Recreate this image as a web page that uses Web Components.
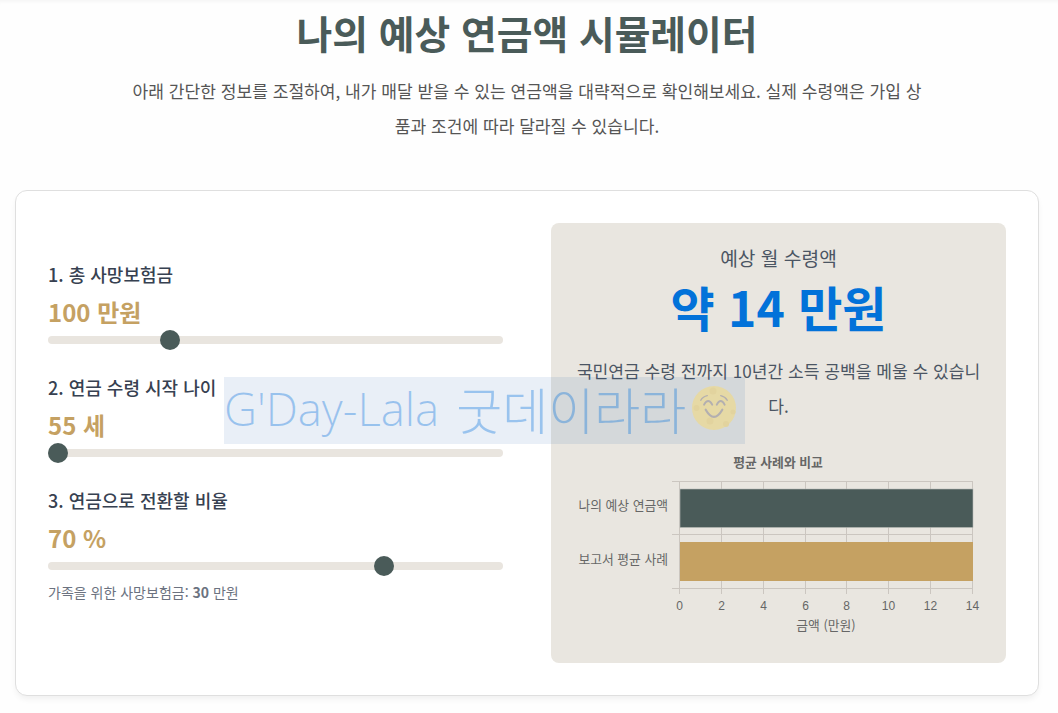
<!DOCTYPE html>
<html lang="ko">
<head>
<meta charset="utf-8">
<title>나의 예상 연금액 시뮬레이터</title>
<style>
  html, body { margin: 0; background: #fefefe; }
  body {
    height: 713px;
    overflow: hidden;
    position: relative;
    font-family: "Noto Sans CJK KR", "Noto Sans", sans-serif;
    color: #3d4852;
    box-shadow: inset 0 4px 4px -3px rgba(0, 0, 0, 0.05);
  }
</style>
</head>
<body>
<template id="range-field-tpl">
  <style>
    :host { display: block; }
    .label { font-size: 18px; line-height: 24px; font-weight: 500; color: #374151; margin-top: -1px; }
    .value { font-size: 24px; line-height: 32px; font-weight: 700; color: #c5a162; margin-top: 10px; }
    input {
      -webkit-appearance: none;
      appearance: none;
      display: block;
      width: 100%;
      height: 8px;
      margin: 8px 0 0;
      border-radius: 8px;
      background: #e9e5df;
    }
    input::-webkit-slider-thumb {
      -webkit-appearance: none;
      width: 20px;
      height: 20px;
      border-radius: 50%;
      background: #4a5b59;
    }
    ::slotted(p) { margin: 12px 0 0; font-size: 14px; line-height: 20px; color: #6b7280; }
  </style>
  <div class="label"></div>
  <div class="value"></div>
  <input type="range">
  <slot></slot>
</template>

<template id="pension-watermark-tpl">
  <style>
    :host {
      position: absolute;
      left: 224px;
      top: 377px;
      width: 521px;
      height: 67px;
      box-sizing: border-box;
      padding-bottom: 6px;
      display: flex;
      align-items: center;
      white-space: nowrap;
      background: rgba(0, 70, 162, 0.086);
      color: rgba(0, 110, 220, 0.34);
      font-family: "Open Sans", sans-serif;
      font-size: 45.500px;
      font-weight: 300;
      pointer-events: none;
    }
    .ko { font-family: "Noto Sans CJK KR", sans-serif; font-size: 50px; margin-left: 17px; }
    svg { margin-left: 5px; flex: none; }
  </style>
  <span>G'Day-Lala</span><span class="ko">굿데이라라</span>
  <svg width="46" height="46" viewBox="0 0 46 46">
    <circle cx="23" cy="23" r="22" fill="#e6d9a5"/>
    <g fill="#e2d39e">
      <circle cx="22" cy="6" r="3.500"/>
      <circle cx="5.500" cy="23" r="3"/>
      <circle cx="19" cy="36" r="3.500"/>
      <circle cx="35" cy="39" r="3"/>
      <circle cx="42" cy="27" r="2.500"/>
    </g>
    <g fill="none" stroke="#b3afb0" stroke-linecap="round">
      <path stroke-width="1.300" d="M9.700 15.300 Q12 11.500 16.300 10.700"/>
      <path stroke-width="1.300" d="M29.700 10.700 Q34 11.500 36.300 15.300"/>
      <path stroke-width="1.800" d="M13 19.700 Q17.200 12.300 21.300 19.700"/>
      <path stroke-width="1.800" d="M25.700 19.700 Q29.700 12.300 33.700 19.700"/>
      <path stroke-width="2.200" d="M14.700 24.700 Q23 39 31.300 24.700"/>
    </g>
  </svg>
</template>

<template id="compare-chart-tpl">
  <style>
    :host { display: block; }
    svg { display: block; }
    text { font-family: "Liberation Sans", "Noto Sans CJK KR", sans-serif; font-size: 12px; fill: #666; }
    .ko { font-family: "Noto Sans CJK KR", sans-serif; font-size: 12.800px; }
    .title { font-family: "Noto Sans CJK KR", sans-serif; font-size: 12.800px; font-weight: 700; }
    line { stroke: #cbc6c0; stroke-width: 1; }
  </style>
  <svg width="455" height="190" viewBox="0 0 455 190"></svg>
</template>

<template id="pension-simulator-tpl">
  <style>
    :host { display: block; padding: 7px 19px 0 15px; }
    header { text-align: center; }
    h1 {
      margin: 0;
      font-size: 38.800px;
      line-height: 50px;
      font-weight: 700;
      color: #4a5b59;
    }
    header p {
      margin: 16px auto 0;
      width: 800px;
      font-size: 17.100px;
      line-height: 35px;
      color: #555;
    }
    .card {
      margin-top: 47px;
      height: 506px;
      box-sizing: border-box;
      padding: 32px;
      display: grid;
      grid-template-columns: 1fr 1fr;
      gap: 48px;
      align-items: center;
      background: #fff;
      border: 1px solid #dfdfdf;
      border-radius: 12px;
      box-shadow: 0 4px 6px -1px rgba(0, 0, 0, 0.06);
    }
    .controls { display: flex; flex-direction: column; gap: 32px; padding-bottom: 21px; }
    .result {
      height: 440px;
      box-sizing: border-box;
      padding: 20px 24px 0;
      background: #e9e6e0;
      border-radius: 8px;
      text-align: center;
    }
    .caption { font-size: 19.200px; line-height: 30px; color: #4b5563; }
    .amount { font-size: 48px; line-height: 60px; font-weight: 700; color: #0272d9; margin-top: 3px; }
    .note { margin: 17px 0 0; font-size: 17.100px; line-height: 35px; color: #4b5563; }
    compare-chart { margin: 28px -24px 0; }
  </style>
  <header>
    <h1>나의 예상 연금액 시뮬레이터</h1>
    <p>아래 간단한 정보를 조절하여, 내가 매달 받을 수 있는 연금액을 대략적으로 확인해보세요. 실제 수령액은 가입 상품과 조건에 따라 달라질 수 있습니다.</p>
  </header>
  <section class="card">
    <div class="controls">
      <range-field label="1. 총 사망보험금" unit="만원" min="10" max="360" step="10" value="100"></range-field>
      <range-field label="2. 연금 수령 시작 나이" unit="세" min="55" max="65" step="1" value="55"></range-field>
      <range-field label="3. 연금으로 전환할 비율" unit="%" min="10" max="90" step="5" value="70">
        <p>가족을 위한 사망보험금: <b>30</b> 만원</p>
      </range-field>
    </div>
    <div class="result">
      <div class="caption">예상 월 수령액</div>
      <div class="amount">약 14 만원</div>
      <p class="note">국민연금 수령 전까지 10년간 소득 공백을 메울 수 있습니다.</p>
      <compare-chart></compare-chart>
    </div>
  </section>
</template>

<pension-simulator></pension-simulator>
<pension-watermark></pension-watermark>

<script>
  function fromTemplate(el, id) {
    const root = el.attachShadow({ mode: 'open' });
    root.appendChild(document.getElementById(id).content.cloneNode(true));
    return root;
  }

  class RangeField extends HTMLElement {
    constructor() {
      super();
      this._root = fromTemplate(this, 'range-field-tpl');
    }
    connectedCallback() {
      const input = this._root.querySelector('input');
      for (const attr of ['min', 'max', 'step', 'value']) input.setAttribute(attr, this.getAttribute(attr));
      input.value = this.getAttribute('value');
      this._root.querySelector('.label').textContent = this.getAttribute('label');
      const show = () => {
        this._root.querySelector('.value').textContent = `${input.value} ${this.getAttribute('unit')}`;
      };
      input.addEventListener('input', show);
      show();
    }
  }

  class CompareChart extends HTMLElement {
    constructor() {
      super();
      this._root = fromTemplate(this, 'compare-chart-tpl');
    }
    connectedCallback() {
      const x0 = 128, x1 = 421, top = 30, bottom = 137, mid = 83;
      const scale = v => x0 + (x1 - x0) * v / 14;
      let s = `<text class="title" x="227" y="16" text-anchor="middle">평균 사례와 비교</text>`;
      for (let v = 0; v <= 14; v += 2) {
        const x = Math.round(scale(v)) + 0.5;
        s += `<line x1="${x}" x2="${x}" y1="${top}" y2="${bottom + 6}"/>`;
        s += `<text x="${x}" y="159" text-anchor="middle">${v}</text>`;
      }
      for (const y of [top, mid, bottom]) s += `<line x1="${x0 - 7}" x2="${x1 + 1}" y1="${y + 0.5}" y2="${y + 0.5}"/>`;
      s += `<rect x="${x0 + 1}" y="38" width="${x1 - x0}" height="38.500" fill="#4a5b59" stroke="#b9bdb8" stroke-width="0.600"/>`;
      s += `<rect x="${x0 + 1}" y="91" width="${x1 - x0}" height="39" fill="#c5a162"/>`;
      s += `<text class="ko" x="117" y="59" text-anchor="end">나의 예상 연금액</text>`;
      s += `<text class="ko" x="117" y="113" text-anchor="end">보고서 평균 사례</text>`;
      s += `<text class="ko" x="275" y="179" text-anchor="middle">금액 (만원)</text>`;
      this._root.querySelector('svg').innerHTML = s;
    }
  }

  class PensionWatermark extends HTMLElement {
    constructor() {
      super();
      fromTemplate(this, 'pension-watermark-tpl');
    }
  }

  class PensionSimulator extends HTMLElement {
    constructor() {
      super();
      fromTemplate(this, 'pension-simulator-tpl');
    }
  }

  customElements.define('range-field', RangeField);
  customElements.define('compare-chart', CompareChart);
  customElements.define('pension-watermark', PensionWatermark);
  customElements.define('pension-simulator', PensionSimulator);
</script>
</body>
</html>
